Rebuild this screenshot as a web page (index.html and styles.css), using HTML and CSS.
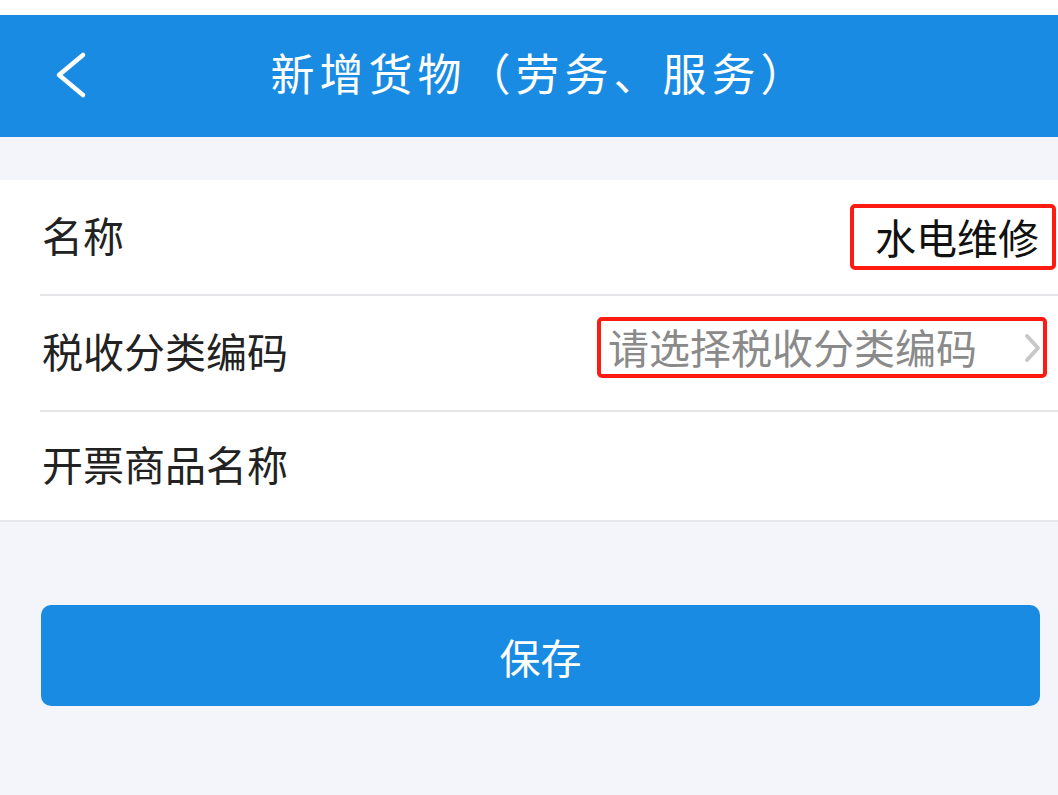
FILE: index.html
```html
<!DOCTYPE html>
<html lang="zh-CN">
<head>
  <meta charset="UTF-8">
  <meta name="viewport" content="width=device-width, initial-scale=1.0">
  <title>新增货物（劳务、服务）</title>
  <link rel="stylesheet" href="styles.css">
</head>
<body>
  <div class="page">
    <div class="status"></div>
    <header class="nav">
      <a class="back" href="#">
        <svg width="34" height="48" viewBox="0 0 34 48"><path d="M30 4 L6 24 L30 44" fill="none" stroke="#fff" stroke-width="4.5" stroke-linecap="round" stroke-linejoin="round"/></svg>
      </a>
      <h1>新增货物（劳务、服务）</h1>
    </header>

    <div class="gap"></div>

    <div class="card">
      <div class="row">
        <span class="label">名称</span>
        <span class="value mark">水电维修</span>
      </div>
      <div class="row">
        <span class="label">税收分类编码</span>
        <span class="value placeholder mark">请选择税收分类编码
          <svg class="arrow" width="20" height="30" viewBox="0 0 20 30"><path d="M5 3 L16 15 L5 27" fill="none" stroke="#c8c8c8" stroke-width="4" stroke-linecap="round" stroke-linejoin="round"/></svg>
        </span>
      </div>
      <div class="row last">
        <span class="label">开票商品名称</span>
      </div>
    </div>

    <div class="actions">
      <button type="button">保存</button>
    </div>
  </div>
</body>
</html>
```

FILE: styles.css
```css
body {
  margin: 0;
  font-family: "Noto Sans CJK SC", "Noto Sans", sans-serif;
  background: #f3f5fa;
}
.page {
  width: 1058px;
  min-height: 795px;
}
.status {
  height: 15px;
  background: #ffffff;
}
.nav {
  position: relative;
  height: 122px;
  background: #1a8be3;
  display: flex;
  align-items: center;
  justify-content: center;
}
.back {
  position: absolute;
  left: 53px;
  top: 36px;
  display: block;
}
.nav h1 {
  margin: 0 0 8px 22px;
  color: #ffffff;
  font-size: 44px;
  font-weight: 400;
  letter-spacing: 5px;
}
.gap {
  height: 43px;
}
.card {
  background: #ffffff;
  padding-left: 40px;
  border-bottom: 2px solid #e6e7ea;
}
.row {
  height: 114px;
  display: flex;
  align-items: center;
  justify-content: space-between;
  border-bottom: 2px solid #e4e5e8;
}
.row.last {
  height: 108px;
  border-bottom: none;
}
.label {
  font-size: 41px;
  color: #222222;
  margin-top: -6px;
  padding-left: 2px;
}
.value {
  font-size: 41px;
  line-height: 50px;
  color: #111111;
  display: flex;
  align-items: center;
}
.mark {
  border: 4px solid #ff1a12;
  border-radius: 5px;
}
.row:first-child .value {
  padding: 3px 13px 5px 21px;
  margin-right: 2px;
  margin-top: 0;
}
.placeholder {
  color: #8a8a8a;
  padding: 0 1px 3px 7px;
  margin-right: 11px;
  margin-top: -12px;
}
.arrow {
  margin-left: 45px;
  margin-top: 4px;
}
.actions {
  padding: 83px 18px 0 41px;
}
button {
  width: 999px;
  height: 101px;
  background: #1a8be3;
  color: #ffffff;
  border: none;
  border-radius: 10px;
  font-family: inherit;
  font-size: 41px;
  cursor: pointer;
}
```
